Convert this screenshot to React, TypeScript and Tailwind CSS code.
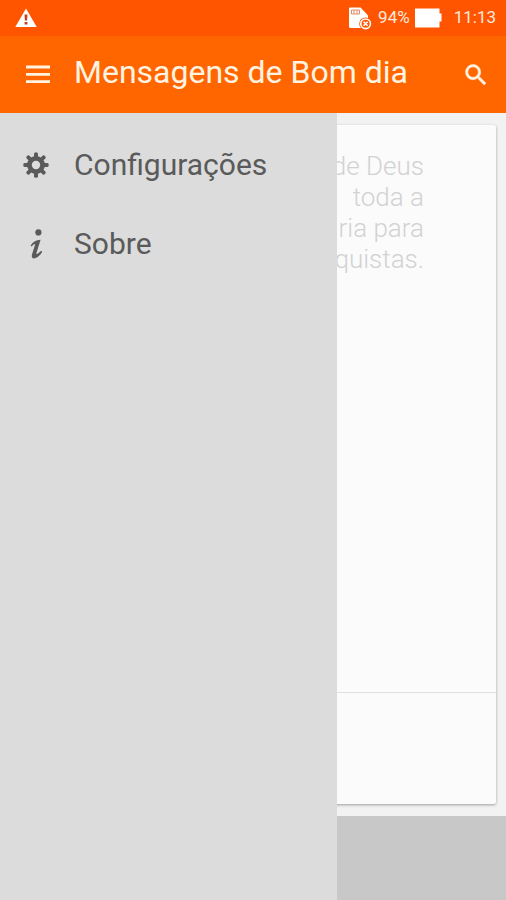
import type { ReactNode } from 'react';

type DrawerItemProps = {
  icon: ReactNode;
  label: string;
};

const quoteLines = ['de Deus', 'toda a', 'ria para', 'quistas.'];

const gearTeeth = [0, 45, 90, 135, 180, 225, 270, 315];

const WarningIcon = () => (
  <svg className="w-6 h-5" viewBox="0 0 24 20" aria-hidden="true">
    <path d="M12 0.5 22.7 19H1.3Z" fill="#fff" />
    <path d="M10.5 6.5h3l-.4 6h-2.2zM10.6 14h2.8v2.6h-2.8z" fill="#c8401a" />
  </svg>
);

const SimIcon = () => (
  <svg className="w-6 h-6" viewBox="0 0 24 24" aria-hidden="true">
    <path d="M2 1.5h10.5L20 9.5v12.5H2.5q-1.5 0-1.5-1.5v-18q0-1 1-1z" fill="#fff" />
    <path d="M3.5 4h8v4h-8zM6 4v4M9 4v4" fill="none" stroke="#e58a66" />
    <circle cx="17.6" cy="17.8" r="6.4" fill="#ff5500" />
    <circle cx="17.6" cy="17.8" r="4.8" fill="none" stroke="#fff" strokeWidth="1.6" />
    <path d="m15.6 15.8 4 4m0-4-4 4" stroke="#fff" strokeWidth="1.6" />
  </svg>
);

const BatteryIcon = () => (
  <svg className="w-7 h-5" viewBox="0 0 28 20" aria-hidden="true">
    <path d="M1 0.5h24.5v5h2v8h-2v6H1z" fill="#fff" />
  </svg>
);

const MenuIcon = () => (
  <svg className="w-6 h-5" viewBox="0 0 24 20" aria-hidden="true">
    <path d="M0 2h24M0 9.3h24M0 16.6h24" stroke="#fff3e2" strokeWidth="2.8" />
  </svg>
);

const SearchIcon = () => (
  <svg className="w-7 h-7" viewBox="0 0 24 24" aria-hidden="true">
    <path
      fill="#fff3e2"
      stroke="#fff3e2"
      strokeWidth="0.5"
      d="M15.5 14h-.79l-.28-.27A6.47 6.47 0 0 0 16 9.5 6.5 6.5 0 1 0 9.5 16c1.61 0 3.09-.59 4.23-1.57l.27.28v.79l5 4.99L20.49 19l-4.99-5zm-6 0a4.5 4.5 0 1 1 0-9 4.5 4.5 0 0 1 0 9z"
    />
  </svg>
);

const GearIcon = () => (
  <svg className="w-7 h-7" viewBox="0 0 28 28" aria-hidden="true">
    <circle cx="14" cy="14" r="6.6" fill="none" stroke="#5a5a5a" strokeWidth="4.8" />
    {gearTeeth.map((angle) => (
      <path
        key={angle}
        d="M12 6V2.8q0-1.6 2-1.6t2 1.6V6z"
        fill="#5a5a5a"
        transform={`rotate(${angle} 14 14)`}
      />
    ))}
  </svg>
);

const InfoIcon = () => (
  <svg className="w-7 h-8" viewBox="0 0 28 32" aria-hidden="true">
    <circle cx="16.4" cy="4.4" r="3.1" fill="#5a5a5a" />
    <path
      fill="#5a5a5a"
      d="M8.6 17.6C10.6 14 13.6 12 18.6 11.8L14.6 24.6C14.2 26.2 14.8 26.4 16 25.6L19.2 22.8 20.2 24C17.6 28 14.6 30.4 12 30.4 9.6 30.4 9.4 28.2 10.2 25.8L12.8 17.4C13.2 16 12.4 15.8 11.6 16.4L9.6 18.4Z"
    />
  </svg>
);

const DrawerItem = ({ icon, label }: DrawerItemProps) => (
  <li>
    <a href="#" className="flex items-center gap-6 h-[79px] pl-[22px] text-[30px] text-[#5a5a5a]">
      {icon}
      <span>{label}</span>
    </a>
  </li>
);

const StatusBar = () => (
  <div className="flex items-center h-9 pl-3.5 pr-2.5 bg-[#ff5500] text-[#ffe9dc]">
    <WarningIcon />
    <div className="flex items-center ml-auto text-[17px]">
      <SimIcon />
      <span className="ml-1.5">94%</span>
      <span className="ml-1 mr-3">
        <BatteryIcon />
      </span>
      <span>11:13</span>
    </div>
  </div>
);

const AppBar = () => (
  <header className="flex items-center h-[77px] pl-[26px] pr-4 bg-[#ff6600]">
    <button type="button" aria-label="Menu">
      <MenuIcon />
    </button>
    <h1 className="ml-6 mb-1.5 text-[32px] leading-10 text-[#fff3e2] whitespace-nowrap">
      Mensagens de Bom dia
    </h1>
    <button type="button" aria-label="Pesquisar" className="ml-auto">
      <SearchIcon />
    </button>
  </header>
);

const Drawer = () => (
  <nav className="absolute inset-y-0 left-0 w-2/3 pt-3 bg-[#dcdcdc]">
    <ul>
      <DrawerItem icon={<GearIcon />} label="Configurações" />
      <DrawerItem icon={<InfoIcon />} label="Sobre" />
    </ul>
  </nav>
);

const MessageCard = () => (
  <article className="flex flex-col flex-1 mx-2.5 my-3 rounded-xs bg-[#fbfbfb] shadow-[0_1px_3px_rgba(0,0,0,0.35)]">
    <p className="flex-1 pr-18 pt-[26px] text-right text-[26px] leading-[31px] font-light text-[#d2d2d2]">
      {quoteLines.map((line) => (
        <span key={line} className="block whitespace-nowrap">
          {line}
        </span>
      ))}
    </p>
    <div className="h-28 border-t border-[#e0e0e0]" />
  </article>
);

export default function App() {
  return (
    <div className="flex flex-col min-h-screen font-[Roboto,sans-serif]">
      <StatusBar />
      <AppBar />
      <main className="relative flex flex-col flex-1 bg-[#f2f2f2]">
        <MessageCard />
        <div className="h-[84px] bg-[#c8c8c8]" />
        <Drawer />
      </main>
    </div>
  );
}
